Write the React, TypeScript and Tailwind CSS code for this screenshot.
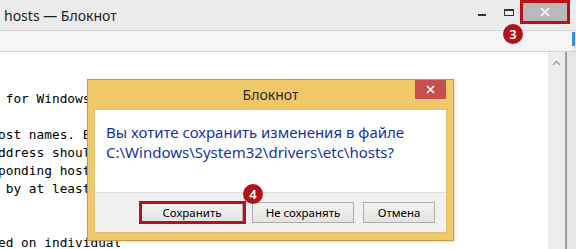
import React from "react";

const LINES = [
  "# Copyright (c) 1993-2009 Microsoft Corp.",
  "#",
  "# This is a sample HOSTS file used by Microsoft TCP/IP for Windows.",
  "#",
  "# This file contains the mappings of IP addresses to host names. Each",
  "# entry should be kept on an individual line. The IP address should",
  "# be placed in the first column followed by the corresponding host name.",
  "# The IP address and the host name should be separated by at least one",
  "# space.",
  "#",
  "# Additionally, comments (such as these) may be inserted on individual",
  "# lines or following the machine name denoted by a '#' symbol.",
];

function Badge({ n }: { n: string }) {
  return (
    <div className="flex h-[20px] w-[20px] items-center justify-center rounded-full bg-[#b0141a] text-[13px] leading-none font-semibold text-white">
      {n}
    </div>
  );
}

export default function App() {
  return (
    <div className="relative h-[249px] w-[576px] overflow-hidden bg-[#ebebeb] font-['Segoe_UI','Noto_Sans',sans-serif]">
      <div className="flex h-full flex-col">
        {/* Title bar */}
        <div className="flex h-[31px] shrink-0 items-start border-b border-[#d6d6d6] bg-[#ebebeb]">
          <div className="pl-[4px] pt-[6px] text-[14px] leading-[20px] text-[#1e1e1e]">
            hosts — Блокнот
          </div>
          <div className="ml-auto flex items-start pr-[6px]">
            <div className="mt-[14px] h-[2px] w-[8px] bg-[#333]" />
            <div className="ml-[18px] mt-[9px] h-[7px] w-[10px] border border-t-2 border-[#333]" />
            <div className="ml-[6px] flex h-[24px] w-[50px] items-center justify-center border-[3px] border-[#b5121b] bg-[#b9b9b9]">
              <svg width="10" height="10" viewBox="0 0 10 10">
                <path d="M1 1 L9 9 M9 1 L1 9" stroke="#fff" strokeWidth="1.6" />
              </svg>
            </div>
          </div>
        </div>
        {/* Menu bar */}
        <div className="flex h-[21px] shrink-0 border-b border-[#d3d3d3]">
          <div className="flex-1 bg-[#f4f5f6]" />
          <div className="w-[4px] bg-[#ebebeb]">
            <div className="mt-[1px] h-[14px] w-[3px] bg-[#3b8fd6]" />
          </div>
        </div>
        {/* Body */}
        <div className="flex min-h-0 flex-1">
          <div className="flex-1 overflow-hidden bg-white pt-[2px] font-['DejaVu_Sans_Mono',monospace] text-[12.8px] text-black">
            {LINES.map((l, i) => (
              <div key={i} className="ml-[-2px] h-[18px] whitespace-pre leading-[18px]">
                {l.slice(54)}
              </div>
            ))}
          </div>
          <div className="flex w-[17px] justify-center bg-[#ededed] pt-[8px]">
            <svg width="9" height="6" viewBox="0 0 9 6">
              <path d="M1 5 L4.5 1.5 L8 5" stroke="#a6a6a6" strokeWidth="1.6" fill="none" />
            </svg>
          </div>
          <div className="w-[11px] border-l-2 border-[#9d9d9d] bg-[#e6e6e6]" />
        </div>
      </div>

      {/* Badge 3 */}
      <div className="absolute left-[503px] top-[24px]">
        <Badge n="3" />
      </div>

      {/* Dialog */}
      <div className="absolute left-[87px] top-[79px] flex h-[162px] w-[367px] flex-col border border-[#c19c45] bg-[#f0c86a] shadow-[1px_1px_3px_rgba(0,0,0,0.15)]">
        <div className="relative flex h-[29px] items-center justify-center">
          <span className="text-[14px] leading-none text-[#2b2b2b]">Блокнот</span>
          <div className="absolute right-[7px] top-0 flex h-[19px] w-[31px] items-center justify-center bg-[#c74f4f]">
            <svg width="9" height="9" viewBox="0 0 9 9">
              <path d="M1 1 L8 8 M8 1 L1 8" stroke="#fff" strokeWidth="1.6" />
            </svg>
          </div>
        </div>
        <div className="mx-[6px] mb-[7px] flex flex-1 flex-col border border-[#dbc17c] bg-white">
          <div className="h-[82px] pl-[11px] pt-[12px] text-[15px] leading-[20px] text-[#1534a3]">
            <div>Вы хотите сохранить изменения в файле</div>
            <div>C:\Windows\System32\drivers\etc\hosts?</div>
          </div>
          <div className="flex flex-1 items-start justify-end gap-[9px] border-t border-[#dfdfdf] bg-[#f0f0f0] pr-[11px] pt-[9px] text-[11.5px] text-black">
            <div className="relative flex h-[21px] w-[102px] items-center justify-center border border-[#adadad] bg-gradient-to-b from-[#f3f3f3] to-[#e3e3e3]">
              Сохранить
              <div className="absolute left-[-3px] top-[-2px] h-[23px] w-[107px] border-[3px] border-[#b5121b]" />
              <div className="absolute left-[101px] top-[-19px]">
                <Badge n="4" />
              </div>
            </div>
            <div className="flex h-[21px] w-[102px] items-center justify-center border border-[#adadad] bg-gradient-to-b from-[#f3f3f3] to-[#e3e3e3]">
              Не сохранять
            </div>
            <div className="flex h-[21px] w-[72px] items-center justify-center border border-[#adadad] bg-gradient-to-b from-[#f3f3f3] to-[#e3e3e3]">
              Отмена
            </div>
          </div>
        </div>
      </div>
    </div>
  );
}
